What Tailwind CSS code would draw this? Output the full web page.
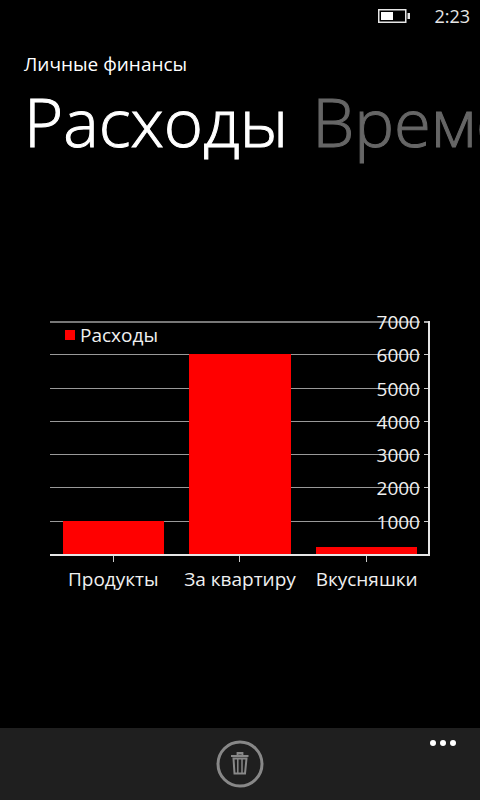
<!DOCTYPE html>
<html lang="ru">
<head>
<meta charset="utf-8">
<meta name="viewport" content="width=device-width, initial-scale=1">
<title>Личные финансы</title>
<script src="https://cdn.jsdelivr.net/npm/@tailwindcss/browser@4"></script>
</head>
<body class="flex min-h-screen flex-col overflow-x-hidden bg-black font-['Open_Sans','Noto_Sans',sans-serif] text-white">
  <div class="flex h-8 items-center justify-end gap-6 pr-[10px] text-[#e6e6e6]">
    <svg class="h-4 w-8" viewBox="0 0 32 16" role="img" aria-label="Батарея">
      <rect x="0.75" y="1.75" width="27" height="12.5" fill="none" stroke="#e6e6e6" stroke-width="1.5"/>
      <rect x="3" y="4" width="12" height="8" fill="#fff"/>
      <rect x="29.5" y="5" width="2.5" height="6" fill="#e6e6e6"/>
    </svg>
    <time class="text-lg leading-8">2:23</time>
  </div>

  <header class="pl-6 pt-4">
    <p class="text-[19px] leading-8">Личные финансы</p>
    <nav class="flex h-24 gap-6 overflow-hidden whitespace-nowrap text-[67px] font-light leading-[82px] [-webkit-text-stroke-width:1px]">
      <a href="#expenses" aria-current="page" class="shrink-0">Расходы</a>
      <a href="#time" class="shrink-0 text-[#666]">Времени</a>
    </nav>
  </header>

  <main class="grow px-[50px] pb-8 pt-[145px]">
    <figure id="expenses" class="text-[19px] text-[#f0f0f0]">
      <div class="relative h-[235px] border-b-2 border-r-2 border-[#e6e6e6]">
        <div class="grid h-full grid-rows-7">
          <div class="flex justify-between"><span class="mr-1 grow border-t-2 border-[#777]"></span><span class="w-1 border-t-2 border-[#aaa]"></span></div>
          <div class="flex justify-between"><span class="mr-1 grow border-t border-[#999]"></span><span class="w-1 border-t border-[#ccc]"></span></div>
          <div class="flex justify-between"><span class="mr-1 grow border-t border-[#999]"></span><span class="w-1 border-t border-[#ccc]"></span></div>
          <div class="flex justify-between"><span class="mr-1 grow border-t border-[#999]"></span><span class="w-1 border-t border-[#ccc]"></span></div>
          <div class="flex justify-between"><span class="mr-1 grow border-t border-[#999]"></span><span class="w-1 border-t border-[#ccc]"></span></div>
          <div class="flex justify-between"><span class="mr-1 grow border-t border-[#999]"></span><span class="w-1 border-t border-[#ccc]"></span></div>
          <div class="flex justify-between"><span class="mr-1 grow border-t border-[#999]"></span><span class="w-1 border-t border-[#ccc]"></span></div>
        </div>
        <div class="absolute inset-y-0 left-0 -right-[2px] grid grid-cols-3 items-end justify-items-center">
          <div class="w-4/5 bg-[#f00]" style="height:14.3%"></div>
          <div class="w-4/5 bg-[#f00]" style="height:85.7%"></div>
          <div class="w-4/5 bg-[#f00]" style="height:3%"></div>
        </div>
        <div class="absolute inset-x-0 -top-[13px] bottom-[13px] grid grid-rows-7 pr-2 text-right leading-7">
          <span>7000</span><span>6000</span><span>5000</span><span>4000</span><span>3000</span><span>2000</span><span>1000</span>
        </div>
        <div class="absolute left-[15px] top-0 flex items-center gap-[5px] leading-7">
          <span class="size-[10px] bg-[#f00]"></span><span>Расходы</span>
        </div>
      </div>
      <figcaption class="grid grid-cols-3 whitespace-nowrap text-center leading-7">
        <div class="flex flex-col items-center gap-[3px]"><span class="h-[6px] w-px bg-[#ccc]"></span><span>Продукты</span></div>
        <div class="flex flex-col items-center gap-[3px]"><span class="h-[6px] w-px bg-[#ccc]"></span><span>За квартиру</span></div>
        <div class="flex flex-col items-center gap-[3px]"><span class="h-[6px] w-px bg-[#ccc]"></span><span>Вкусняшки</span></div>
      </figcaption>
    </figure>
  </main>

  <footer class="grid h-[72px] grid-cols-[1fr_auto_1fr] bg-[#1f1f1f]">
    <button type="button" aria-label="Удалить" class="col-start-2 mt-3 size-12 self-start">
      <svg viewBox="0 0 48 48" class="size-12" fill="none" stroke="#888">
        <circle cx="24" cy="24" r="22" stroke-width="3"/>
        <path d="M15 16H32.500M21.500 13H26.500V15.500H21.500Z" stroke-width="1.800"/>
        <path d="M17.500 18.500L18.500 33.500H29L30.500 18.500Z" stroke-width="2"/>
        <path d="M21.800 19V33M26 19V33" stroke-width="1.500"/>
      </svg>
    </button>
    <button type="button" aria-label="Ещё" class="mr-6 mt-3 flex h-[6px] items-center gap-1 self-start justify-self-end">
      <span class="size-[6px] rounded-full bg-white"></span><span class="size-[6px] rounded-full bg-white"></span><span class="size-[6px] rounded-full bg-white"></span>
    </button>
  </footer>
</body>
</html>
